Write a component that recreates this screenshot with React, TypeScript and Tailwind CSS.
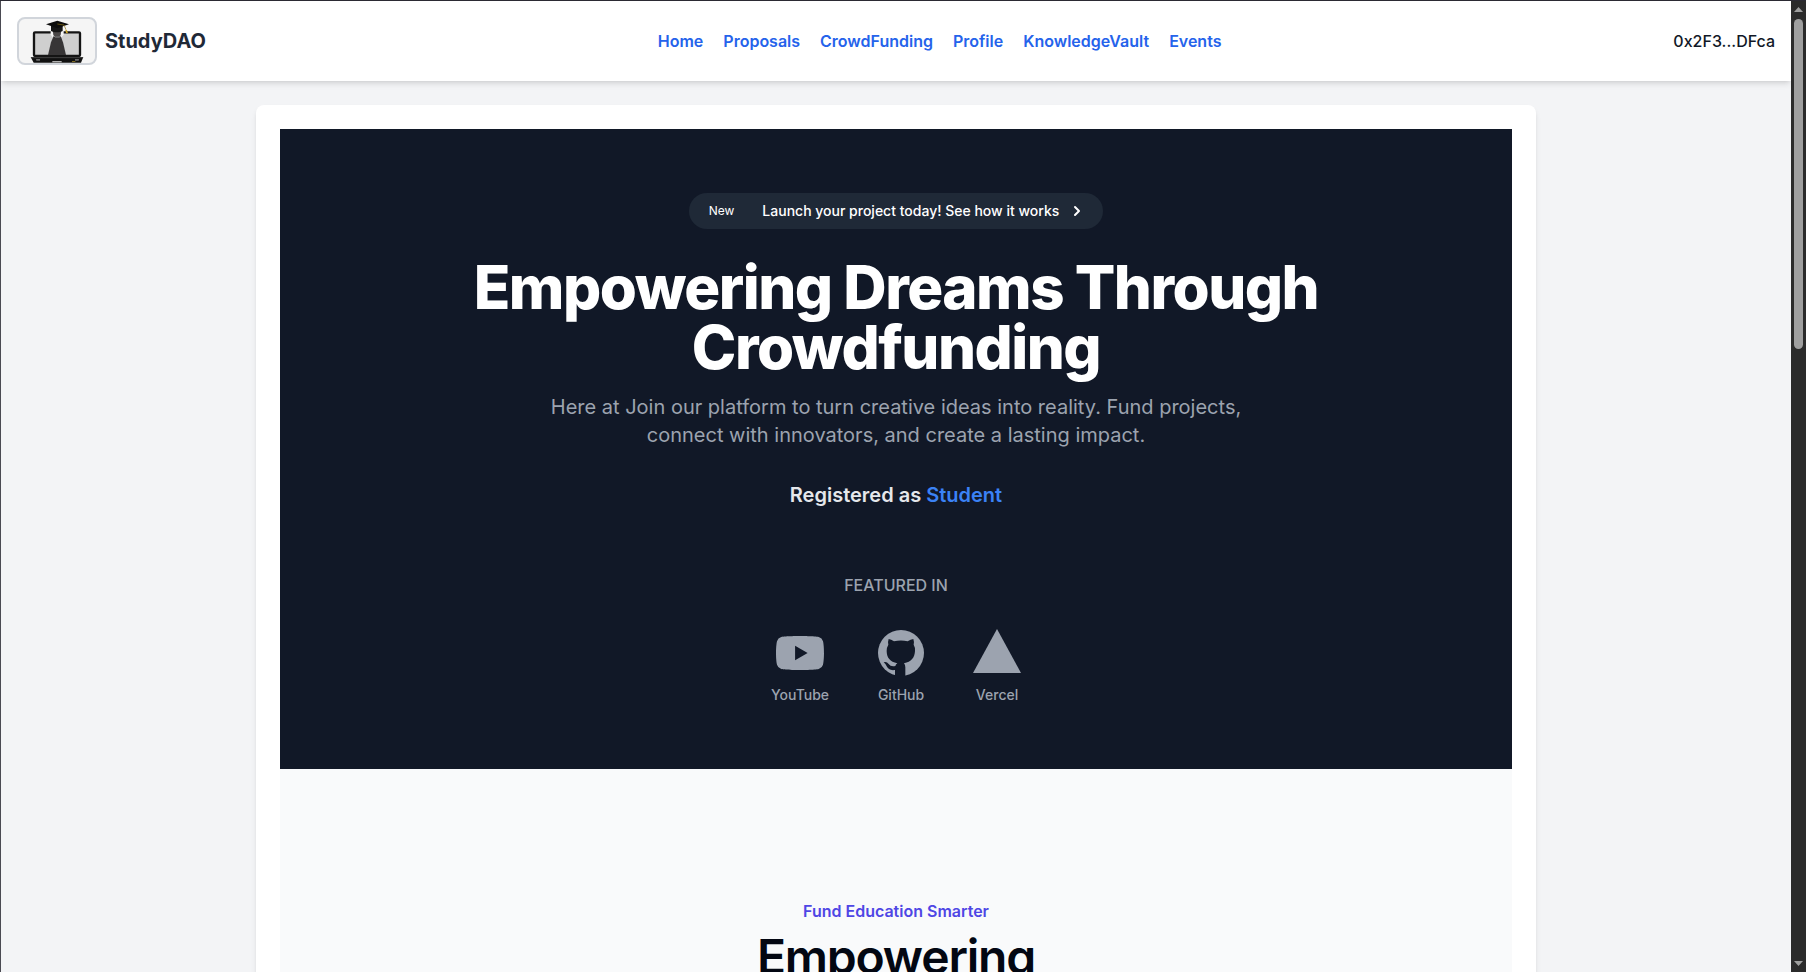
import React from "react";
import { SiYoutube } from "react-icons/si";

const navLinks: string[] = ["Home", "Proposals", "CrowdFunding", "Profile", "KnowledgeVault", "Events"];

function GraduateLogo() {
  return (
    <svg viewBox="6 6 228 132" className="h-full w-full" role="img" aria-label="StudyDAO logo">
      <rect x="51" y="46" width="138" height="71" fill="#cfcfcf" stroke="#141414" strokeWidth="7" rx="3" />
      <path d="M101 40h39v13l-7 8h-26l-6-8z" fill="#f5f5f5" />
      <path d="M107 40h26l-2 14-4 5h-14l-4-5z" fill="#4b4848" />
      <path d="M110 57h21l7 19 9 38H93l9-38z" fill="#373536" />
      <path d="M109 56l6 4h12l6-4" fill="none" stroke="#bdbdbd" strokeWidth="2" />
      <path d="M102 25h35v17c-9 5-26 5-35 0z" fill="#161616" />
      <path d="M121 11l35 11-35 12-34-12z" fill="#0c0c0c" />
      <path d="M121 21l20 3 6 14" fill="none" stroke="#8f7413" strokeWidth="2" />
      <path d="M145 38l5 2 3 9-6-1z" fill="#c9a326" />
      <path d="M41 120h158l-7 17H50z" fill="#111111" />
      <path d="M42 122h156" stroke="#5c5c5c" strokeWidth="2" />
      <path d="M106 133h28v3h-28z" fill="#e5e5e5" />
      <path d="M57 126h12v5H58zM174 126h12l-1 5h-11z" fill="#6b6b6b" />
      <path d="M165 133h10v2h-10z" fill="#a58a2a" />
    </svg>
  );
}

function GithubMark() {
  return (
    <svg viewBox="0 0 144 144" className="size-12" aria-hidden="true">
      <circle cx="72" cy="72" r="69" fill="currentColor" />
      <path
        fill="#111827"
        d="M35 30Q42 31 51 37Q72 32 92 37Q101 31 109 30Q112 38 110 47Q115 55 114 66C113 86 103 98 81 103Q85 107 85 115V144H54V123C40 125 33 120 29 112Q26 104 20 100Q29 97 35 105Q41 114 55 111Q56 106 61 103C39 98 29 86 29 66Q29 55 34 47Q32 38 35 30z"
      />
    </svg>
  );
}

function VercelMark() {
  return (
    <svg viewBox="0 0 48 48" className="size-12" fill="currentColor" aria-hidden="true">
      <path d="M24 0l24 44H0z" />
    </svg>
  );
}

function Header() {
  return (
    <header className="relative flex items-center justify-between bg-white p-4 shadow-[0_4px_6px_-1px_rgba(0,0,0,0.1),0_2px_4px_-2px_rgba(0,0,0,0.1)]">
      <a href="#" className="flex items-center gap-2">
        <span className="block h-12 w-20 overflow-hidden rounded-lg border-2 border-[#d1d5db] bg-[#f5f5f5]">
          <GraduateLogo />
        </span>
        <span className="text-xl font-bold text-[#1f2937]">StudyDAO</span>
      </a>
      <nav className="flex gap-5">
        {navLinks.map((label) => (
          <a key={label} href="#" className="font-semibold text-[#2563eb]">
            {label}
          </a>
        ))}
      </nav>
      <button type="button" className="font-medium text-[#111827]">
        0x2F3...DFca
      </button>
    </header>
  );
}

function Hero() {
  return (
    <section className="flex flex-col items-center bg-[#111827] px-12 py-16 text-center">
      <a href="#" className="mb-7 flex items-center rounded-full bg-[#1f2937] py-1 pr-4 pl-1 text-sm text-white">
        <span className="mr-3 px-4 py-1.5 text-xs">New</span>
        <span className="font-medium">Launch your project today! See how it works</span>
        <svg className="ml-2 size-5" viewBox="0 0 20 20" fill="currentColor" aria-hidden="true">
          <path
            fillRule="evenodd"
            clipRule="evenodd"
            d="M7.293 14.707a1 1 0 010-1.414L10.586 10 7.293 6.707a1 1 0 011.414-1.414l4 4a1 1 0 010 1.414l-4 4a1 1 0 01-1.414 0z"
          />
        </svg>
      </a>
      <h1 className="mb-4 max-w-4xl text-6xl leading-none font-extrabold tracking-tight text-white">
        Empowering Dreams Through Crowdfunding
      </h1>
      <p className="mb-8 max-w-3xl text-xl text-[#9ca3af]">
        Here at Join our platform to turn creative ideas into reality. Fund projects,
        <br />
        connect with innovators, and create a lasting impact.
      </p>
      <p className="mb-16 text-xl font-semibold text-[#e5e7eb]">
        Registered as <span className="text-[#3b82f6]">Student</span>
      </p>
      <h2 className="mb-8 font-medium text-[#9ca3af] uppercase">Featured in</h2>
      <ul className="flex justify-center gap-12 text-sm font-medium text-[#9ca3af]">
        <li>
          <a href="#" className="flex flex-col items-center gap-2">
            <SiYoutube className="size-12" aria-hidden="true" />
            YouTube
          </a>
        </li>
        <li>
          <a href="#" className="flex flex-col items-center gap-2">
            <GithubMark />
            GitHub
          </a>
        </li>
        <li>
          <a href="#" className="flex flex-col items-center gap-2">
            <VercelMark />
            Vercel
          </a>
        </li>
      </ul>
    </section>
  );
}

function Features() {
  return (
    <section className="bg-[#f9fafb] py-32 text-center">
      <p className="text-base leading-7 font-semibold text-[#4f46e5]">Fund Education Smarter</p>
      <h2 className="mt-2 text-5xl leading-none font-semibold tracking-tight text-[#030712]">Empowering</h2>
    </section>
  );
}

function ScrollBar() {
  return (
    <div className="flex w-[15px] shrink-0 flex-col items-center bg-[#2b2b2b] py-1.5" aria-hidden="true">
      <svg width="9" height="5" viewBox="0 0 9 5" fill="#9f9f9f">
        <path d="M4.500 0L9 5H0z" />
      </svg>
      <div className="mt-[7px] flex w-[9px] flex-1 flex-col">
        <div className="h-[35%] rounded-full bg-[#9f9f9f]" />
      </div>
      <svg width="9" height="5" viewBox="0 0 9 5" fill="#9f9f9f">
        <path d="M0 0h9L4.500 5z" />
      </svg>
    </div>
  );
}

export default function App() {
  return (
    <div className="flex h-screen overflow-hidden border-t border-[#2b2a33] bg-[#f3f4f6] font-['Inter',sans-serif]">
      <div className="min-w-0 flex-1 overflow-hidden border-l border-[#4a4a52]">
        <Header />
        <main className="px-6 py-6">
          <div className="mx-auto max-w-7xl rounded-lg bg-white p-6 shadow-[0_4px_6px_-1px_rgba(0,0,0,0.1),0_2px_4px_-2px_rgba(0,0,0,0.1)]">
            <Hero />
            <Features />
          </div>
        </main>
      </div>
      <ScrollBar />
    </div>
  );
}
